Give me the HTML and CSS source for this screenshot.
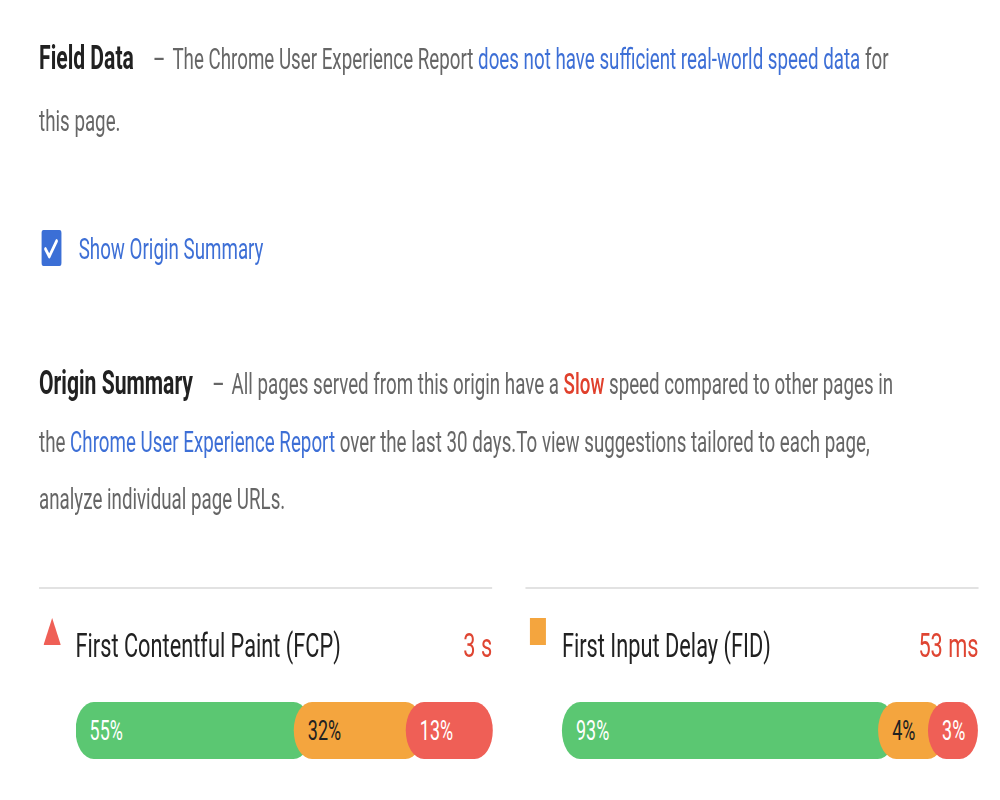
FILE: index.html
```html
<!DOCTYPE html>
<html lang="en">
<head>
<meta charset="utf-8">
<title>Field Data</title>
<link rel="stylesheet" href="styles.css">
</head>
<body>
<div class="page">
  <p class="intro intro-field"><span class="title">Field Data</span><span class="dash">–</span>The Chrome User Experience Report <a class="link" href="#">does not have sufficient real-world speed data</a> for this page.</p>

  <label class="check">
    <span class="box">
      <svg width="31" height="36" viewBox="0 0 31 36"><polyline points="6,19 12,26.5 23.5,11" fill="none" stroke="#fff" stroke-width="3.8" stroke-linecap="round" stroke-linejoin="round"/></svg>
    </span>
    <span class="check-label">Show Origin Summary</span>
  </label>

  <p class="intro intro-origin"><span class="title">Origin Summary</span><span class="dash">–</span>All pages served from this origin have a <span class="slow">Slow</span> speed compared to other pages in the <a class="link" href="#">Chrome User Experience Report</a> over the last 30 days.To view suggestions tailored to each page, analyze individual page URLs.</p>

  <div class="metrics">
    <div class="metric">
      <div class="metric-head">
        <span class="icon-cell"><svg class="tri" width="27" height="27" viewBox="0 0 27 27" preserveAspectRatio="none"><polygon points="13.5,0 27,27 0,27" fill="#ef5f56"/></svg></span>
        <span class="metric-title">First Contentful Paint (FCP)</span>
        <span class="metric-value">3 s</span>
      </div>
      <div class="bar">
        <span class="seg seg-fast" style="width:369px">55%</span>
        <span class="seg seg-avg" style="width:203px">32%</span>
        <span class="seg seg-slow" style="width:136px">13%</span>
      </div>
    </div>
    <div class="metric">
      <div class="metric-head">
        <span class="icon-cell"><span class="square"></span></span>
        <span class="metric-title">First Input Delay (FID)</span>
        <span class="metric-value">53 ms</span>
      </div>
      <div class="bar">
        <span class="seg seg-fast" style="width:522px">93%</span>
        <span class="seg seg-avg" style="width:106px">4%</span>
        <span class="seg seg-slow" style="width:78px">3%</span>
      </div>
    </div>
  </div>
</div>
</body>
</html>
```

FILE: styles.css
```css
html, body {
  margin: 0;
  padding: 0;
  background: #ffffff;
  overflow: hidden;
}

.page {
  width: 1562.5px;
  box-sizing: border-box;
  padding: 27px 0 0 61px;
  transform: scaleX(0.64);
  transform-origin: 0 0;
  font-family: Roboto, "Liberation Sans", sans-serif;
  color: #666666;
  font-size: 29.3px;
}

.intro {
  margin: 0;
  width: 1361px;
}

.intro-field {
  line-height: 62px;
}

.intro-origin {
  line-height: 57.5px;
  margin-top: 75px;
}

.title {
  font-size: 33px;
  font-weight: 700;
  color: #212121;
}

.dash {
  margin: 0 11px 0 30px;
  color: #666666;
}

.link {
  color: #3d6fd6;
  text-decoration: none;
}

.slow {
  color: #e0402c;
  font-weight: 500;
}

.check {
  display: flex;
  align-items: center;
  height: 62px;
  margin-top: 65px;
}

.box {
  display: block;
  width: 31px;
  height: 36px;
  margin-left: 4px;
  background: #3b6fd6;
  border-radius: 3px;
}

.box svg {
  display: block;
}

.check-label {
  margin-left: 27px;
  color: #3d6fd6;
  line-height: 62px;
  position: relative;
  top: 1px;
}

.metrics {
  display: grid;
  grid-template-columns: 708px 708px;
  column-gap: 52px;
  margin-top: 58px;
}

.metric {
  border-top: 2px solid #e2e2e2;
}

.metric-head {
  display: flex;
  align-items: flex-start;
  padding-top: 29px;
}

.icon-cell {
  flex: 0 0 57px;
  box-sizing: border-box;
  padding-left: 7px;
}

.tri {
  display: block;
}

.square {
  display: block;
  width: 25px;
  height: 27px;
  background: #f4a53e;
}

.metric-title {
  flex: 1 1 auto;
  margin-top: 7px;
  font-size: 34px;
  line-height: 40px;
  color: #212121;
}

.metric-value {
  margin-top: 7px;
  font-size: 34px;
  line-height: 40px;
  color: #df4532;
}

.bar {
  display: flex;
  height: 57px;
  margin: 37px 0 0 57px;
}

.seg {
  flex: 0 0 auto;
  box-sizing: border-box;
  height: 57px;
  border-radius: 28.5px;
  padding-left: 22px;
  font-size: 28px;
  line-height: 57px;
  position: relative;
}

.seg + .seg {
  margin-left: -28px;
}

.seg-fast {
  background: #5bc772;
  color: #ffffff;
}

.seg-avg {
  background: #f4a53e;
  color: #212121;
}

.seg-slow {
  background: #ef5f56;
  color: #ffffff;
}
```
